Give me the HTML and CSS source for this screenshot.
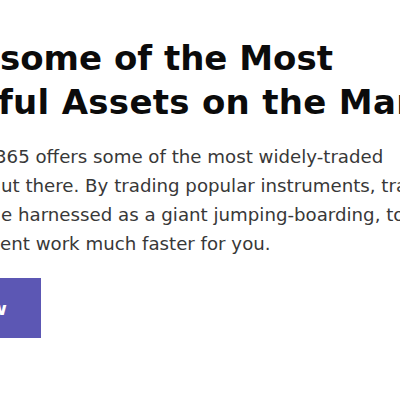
FILE: index.html
```html
<!DOCTYPE html>
<html lang="en">
<head>
<meta charset="utf-8">
<title>Assets</title>
<link rel="stylesheet" href="styles.css">
</head>
<body>
<section class="promo">
  <h2 class="promo-title">
    <span class="line l1">some of the Most</span>
    <span class="line l2">ful Assets on the Market</span>
  </h2>
  <p class="promo-text">
    <span class="line p1">365 offers some of the most widely-traded</span>
    <span class="line p2">ut there. By trading popular instruments, traders</span>
    <span class="line p3">e harnessed as a giant jumping-boarding, to</span>
    <span class="line p4">ent work much faster for you.</span>
  </p>
  <div class="promo-actions">
    <a class="btn" href="#">w</a>
  </div>
</section>
</body>
</html>
```

FILE: styles.css
```css
html, body {
  margin: 0;
  padding: 0;
  background: #ffffff;
  overflow: hidden;
  width: 400px;
  height: 400px;
}
.promo {
  padding-top: 36px;
}
.line {
  display: block;
  white-space: nowrap;
}
.promo-title {
  margin: 0;
  font-family: "DejaVu Sans", sans-serif;
  font-weight: 700;
  font-size: 34px;
  line-height: 44px;
  color: #0b0b0b;
}
.l2 { margin-left: -2px; letter-spacing: 0.3px; }
.promo-text {
  margin: 18px 0 0 0;
  font-family: "DejaVu Sans", sans-serif;
  font-size: 18.2px;
  line-height: 29px;
  color: #383838;
}
.p1 { margin-left: -5px; }
.p2 { margin-left: 1px; }
.p3 { margin-left: 1px; }
.p4 { margin-left: 0; }
.promo-actions {
  margin-top: 20px;
}
.btn {
  display: flex;
  align-items: center;
  justify-content: flex-end;
  width: 41px;
  height: 60px;
  padding-right: 34px;
  box-sizing: border-box;
  background: #5c57b4;
  color: #ffffff;
  font-family: "DejaVu Sans", sans-serif;
  font-weight: 700;
  font-size: 18px;
  text-decoration: none;
}
```
